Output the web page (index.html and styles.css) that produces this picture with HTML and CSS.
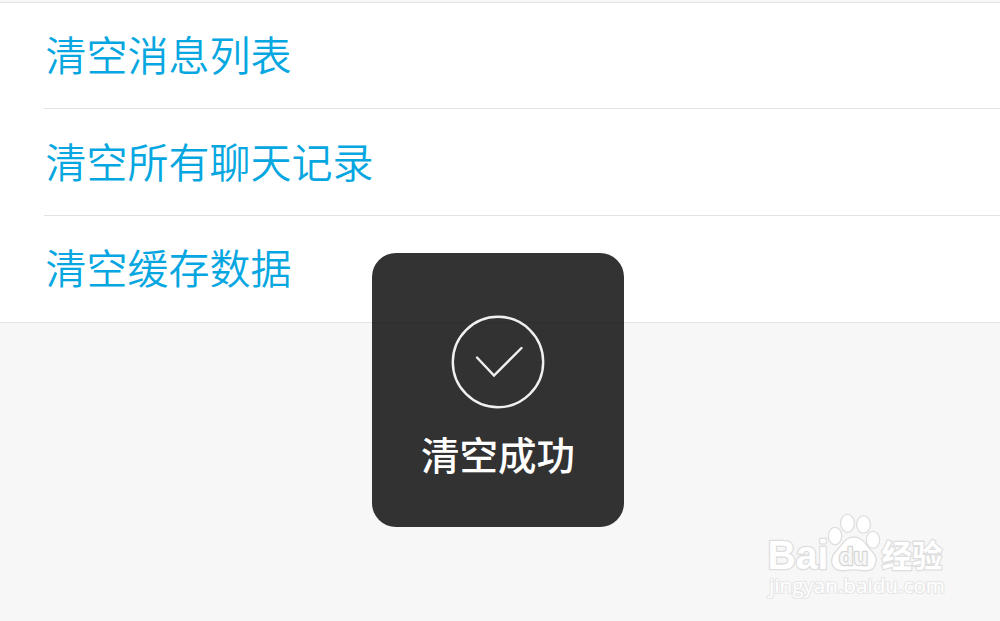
FILE: index.html
```html
<!DOCTYPE html>
<html lang="zh-CN">
<head>
  <meta charset="UTF-8" />
  <meta name="viewport" content="width=device-width, initial-scale=1.0" />
  <title>清空成功</title>
  <link rel="stylesheet" href="styles.css">
</head>
<body>
  <div class="list">
    <div class="item">清空消息列表</div>
    <div class="item">清空所有聊天记录</div>
    <div class="item">清空缓存数据</div>
  </div>

  <div class="toast">
    <svg class="toast-icon" viewBox="0 0 94 94">
      <circle cx="47" cy="47" r="45.2" />
      <path d="M26 42.5 L43 60.5 L70.5 33" />
    </svg>
    <div class="toast-text">清空成功</div>
  </div>

  <svg class="watermark" viewBox="0 0 190 100">
    <g class="logo">
      <text class="latin" x="5.5" y="69" textLength="61" lengthAdjust="spacingAndGlyphs">Bai</text>
      <!-- paw -->
      <ellipse cx="73" cy="36" rx="6.7" ry="8.7" />
      <ellipse cx="85.5" cy="23.3" rx="6.9" ry="9" />
      <ellipse cx="101.5" cy="24.5" rx="6.9" ry="8.7" />
      <ellipse cx="111" cy="39.8" rx="6.7" ry="8.5" />
      <path d="M92 37 C100 37 103 43.5 108 49 C113 54 115.500 58 113.500 64 C111.500 71 106 71.500 100 70.500 C94 69.500 90 69.500 84 70.500 C77 71.500 72 70.500 70 64 C68.500 58 71 54 76 49 C81 43.500 84 37 92 37 Z" />
      <text class="du" x="77" y="65" textLength="29" lengthAdjust="spacingAndGlyphs">du</text>
      <text class="cjk" x="119.5" y="67" textLength="61" lengthAdjust="spacingAndGlyphs">经验</text>
    </g>
    <text class="site" x="7" y="93" textLength="176" lengthAdjust="spacingAndGlyphs">jingyan.baidu.com</text>
  </svg>
</body>
</html>
```

FILE: styles.css
```css
* { box-sizing: border-box; }
html, body { margin: 0; padding: 0; height: 100%; overflow: hidden; }
body { padding-top: 2px; background: #f7f7f7; font-family: "Noto Sans CJK SC", sans-serif; }
.list { background: #fff; border-top: 1px solid #e3e3e3; border-bottom: 1px solid #e3e3e3; padding-left: 44px; }
.item { height: 107px; padding: 0 1.5px; border-bottom: 1px solid #e3e3e3; color: #06a7e1; font-size: 41px; font-weight: 350; line-height: 102px; }
.item:first-child { height: 106px; line-height: 100px; }
.item:last-child { height: 106px; line-height: 101px; border-bottom: none; }

.toast { position: absolute; left: 372px; top: 253px; width: 252px; height: 274px; padding-top: 62px; border-radius: 24px; background: rgba(0,0,0,0.8); display: flex; flex-direction: column; align-items: center; color: #fff; }
.toast-icon { width: 94px; height: 94px; fill: none; stroke: #f0f0ee; stroke-width: 2.4; stroke-linecap: round; }
.toast-text { margin-top: 15px; font-size: 38.5px; font-weight: 500; line-height: 58px; }

.watermark { position: absolute; left: 762px; top: 500px; width: 190px; height: 100px; }
.logo { fill: #fff; stroke: #dedede; stroke-width: 1.3; }
.logo text, .site { paint-order: stroke; stroke-width: 2.6; stroke-linejoin: round; }
.latin { font: bold 41px "Liberation Sans", sans-serif; }
.logo .du { font: bold 24px "Liberation Sans", sans-serif; fill: #f7f7f7; stroke: #d6d6d6; }
.cjk { font: bold 31px "Noto Sans CJK SC", sans-serif; }
.site { font: 20px "Open Sans", sans-serif; fill: #fff; stroke: #e6e6e6; stroke-width: 2.2; }
```
